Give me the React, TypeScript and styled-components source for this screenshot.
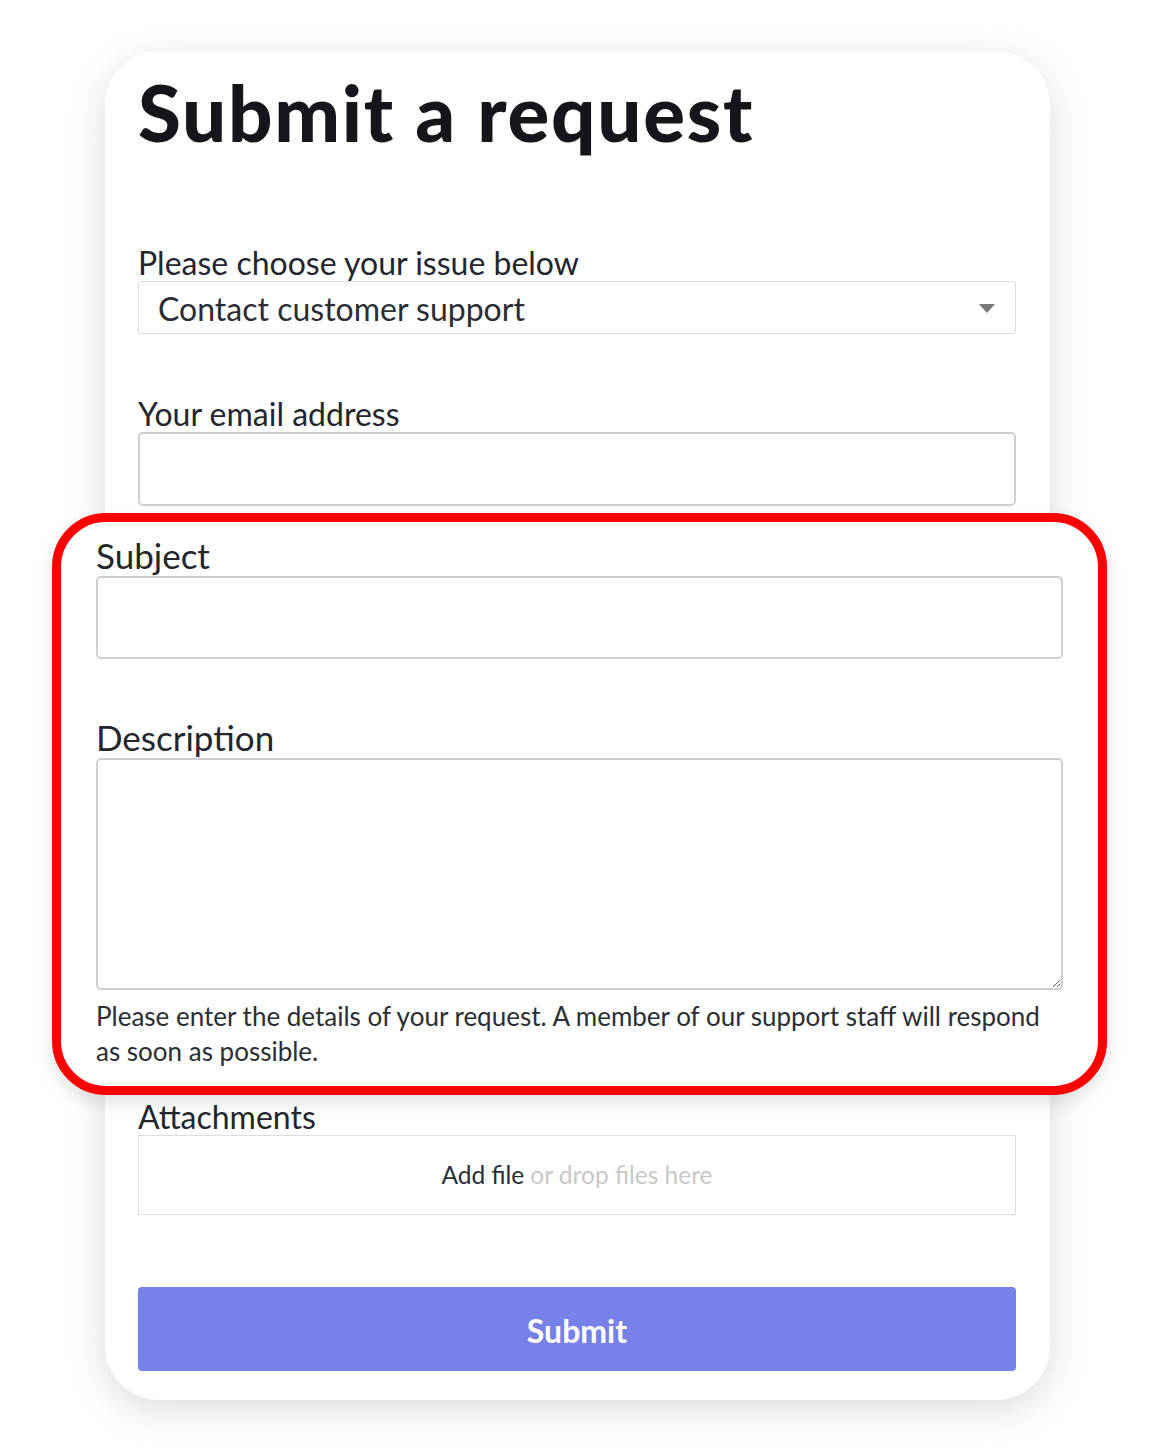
import React from "react";
import styled, { createGlobalStyle } from "styled-components";

const Global = createGlobalStyle`
  html, body { margin: 0; padding: 0; background: #ffffff; }
  body {
    font-family: Lato, "Open Sans", "Liberation Sans", sans-serif;
    -webkit-font-smoothing: antialiased;
  }
`;

const Page = styled.div`
  position: relative;
  width: 1158px;
  height: 1452px;
  overflow: hidden;
  box-sizing: border-box;
  padding-top: 51px;
`;

const Card = styled.main`
  margin-left: 105px;
  width: 945px;
  height: 1349px;
  box-sizing: border-box;
  padding: 15px 34px 0 33px;
  background: #ffffff;
  border-radius: 54px;
  box-shadow: 0 10px 40px rgba(0, 0, 0, 0.14);
  display: flex;
  flex-direction: column;
`;

const Title = styled.h1`
  margin: 0;
  font-size: 78px;
  font-weight: 900;
  line-height: 1.2;
  color: #14161c;
  letter-spacing: 1.75px;
`;

const Field = styled.div<{ $gap: number }>`
  display: flex;
  flex-direction: column;
  margin-top: ${(p) => p.$gap}px;
`;

const Label = styled.label<{ $size?: number; $line?: number }>`
  font-size: ${(p) => p.$size ?? 32}px;
  line-height: ${(p) => p.$line ?? 37}px;
  color: #23262c;
  font-weight: 400;
`;

const SelectBox = styled.div`
  height: 53px;
  box-sizing: border-box;
  border: 1.5px solid #dcdcdc;
  border-radius: 3px;
  display: flex;
  align-items: center;
  justify-content: space-between;
  padding: 3px 20px 0 19px;
  font-size: 32px;
  color: #2a2d33;
`;

const Input = styled.div<{ $h: number }>`
  height: ${(p) => p.$h}px;
  box-sizing: border-box;
  border: 2px solid #cfcfd2;
  border-radius: 5px;
  background: #fff;
`;

const TextArea = styled.textarea<{ $h: number }>`
  display: block;
  width: 100%;
  height: ${(p) => p.$h}px;
  box-sizing: border-box;
  border: 2px solid #cfcfd2;
  border-radius: 5px;
  background: #fff;
  resize: vertical;
  margin: 0;
  font: inherit;
`;

const Help = styled.p`
  margin: 9px 0 0;
  font-size: 26px;
  line-height: 35px;
  color: #2b2e33;
`;

const DropZone = styled.div`
  height: 80px;
  box-sizing: border-box;
  border: 1.5px solid #dedede;
  display: flex;
  align-items: center;
  justify-content: center;
  font-size: 24.5px;
  color: #2a2d33;
`;

const DropHint = styled.span`
  color: #c8c8c8;
  margin-left: 6px;
`;

const SubmitButton = styled.button`
  margin-top: 72px;
  height: 84px;
  padding-top: 4px;
  border: none;
  border-radius: 4px;
  background: #7781e8;
  color: #ffffff;
  font-family: inherit;
  font-size: 32px;
  font-weight: 700;
`;

/* Enlarged callout of the subject + description section, laid over the card */
const Callout = styled.section`
  position: absolute;
  left: 52px;
  top: 513px;
  width: 1055px;
  height: 582px;
  box-sizing: border-box;
  border: 9px solid #ff0000;
  border-radius: 54px;
  background: #ffffff;
  box-shadow: 0 8px 18px rgba(0, 0, 0, 0.12);
  padding: 12px 35px 0 35px;
  display: flex;
  flex-direction: column;
`;

function Caret() {
  return (
    <svg width="16" height="9" viewBox="0 0 16 9">
      <path d="M0 0 H16 L8 9 Z" fill="#7a7a7a" />
    </svg>
  );
}

export default function App() {
  return (
    <>
      <Global />
      <Page>
        <Card>
          <Title>Submit a request</Title>

          <Field $gap={84}>
            <Label>Please choose your issue below</Label>
            <SelectBox>
              <span>Contact customer support</span>
              <Caret />
            </SelectBox>
          </Field>

          <Field $gap={61}>
            <Label>Your email address</Label>
            <Input $h={74} />
          </Field>

          <Field $gap={592}>
            <Label>Attachments</Label>
            <DropZone>
              Add file<DropHint>or drop files here</DropHint>
            </DropZone>
          </Field>

          <SubmitButton>Submit</SubmitButton>
        </Card>

        <Callout>
          <Label $size={35} $line={42}>Subject</Label>
          <Input $h={83} />
          <Field $gap={57}>
            <Label $size={35} $line={42}>Description</Label>
            <TextArea $h={232} />
          </Field>
          <Help>
            Please enter the details of your request. A member of our support staff will respond
            as soon as possible.
          </Help>
        </Callout>
      </Page>
    </>
  );
}
